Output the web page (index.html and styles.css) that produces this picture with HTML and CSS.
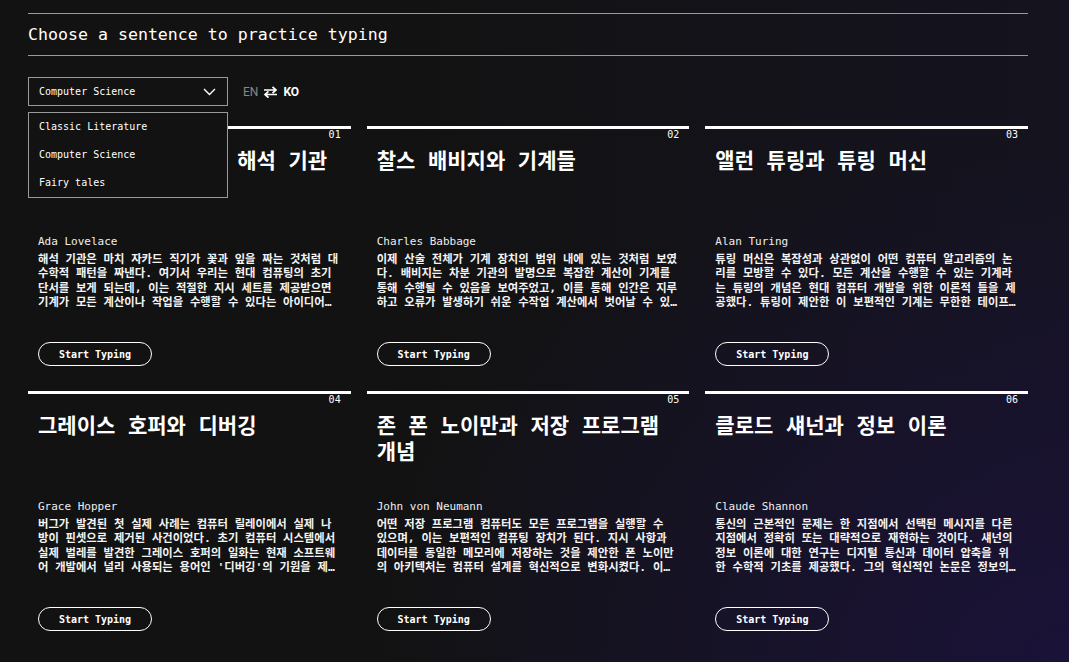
FILE: index.html
```html
<!DOCTYPE html>
<html lang="ko">
<head>
<meta charset="utf-8">
<title>Typing Practice</title>
<link rel="stylesheet" href="styles.css">
</head>
<body>
<main class="page">
  <header class="head">
    <h1 class="head-title">Choose a sentence to practice typing</h1>
  </header>

  <div class="controls">
    <div class="select-wrap">
      <button class="select">
        <span>Computer Science</span>
        <svg class="chev" width="13" height="8" viewBox="0 0 13 8"><polyline points="1,1 6.5,6.5 12,1" fill="none" stroke="#fff" stroke-width="1.4"/></svg>
      </button>
      <ul class="menu">
        <li>Classic Literature</li>
        <li>Computer Science</li>
        <li>Fairy tales</li>
      </ul>
    </div>
    <div class="lang">
      <span class="lang-off">EN</span>
      <svg class="swap" width="15" height="12" viewBox="0 0 15 12"><path d="M1 4H13M9.5 0.8L13 4L9.5 7.2" fill="none" stroke="#fff" stroke-width="1.7"/><path d="M14 8.5H2M5.5 5.3L2 8.5L5.5 11.7" fill="none" stroke="#fff" stroke-width="1.7"/></svg>
      <span class="lang-on">KO</span>
    </div>
  </div>

  <section class="grid">
    <article class="card">
      <div class="num">01</div>
      <h2 class="title">에이다 러브레이스와 해석 기관</h2>
      <div class="author">Ada Lovelace</div>
      <p class="desc">해석 기관은 마치 자카드 직기가 꽃과 잎을 짜는 것처럼 대수학적 패턴을 짜낸다. 여기서 우리는 현대 컴퓨팅의 초기 단서를 보게 되는데, 이는 적절한 지시 세트를 제공받으면 기계가 모든 계산이나 작업을 수행할 수 있다는 아이디어를 보여준다.</p>
      <button class="btn">Start Typing</button>
    </article>
    <article class="card">
      <div class="num">02</div>
      <h2 class="title">찰스 배비지와 기계들</h2>
      <div class="author">Charles Babbage</div>
      <p class="desc">이제 산술 전체가 기계 장치의 범위 내에 있는 것처럼 보였다. 배비지는 차분 기관의 발명으로 복잡한 계산이 기계를 통해 수행될 수 있음을 보여주었고, 이를 통해 인간은 지루하고 오류가 발생하기 쉬운 수작업 계산에서 벗어날 수 있게 되었다.</p>
      <button class="btn">Start Typing</button>
    </article>
    <article class="card">
      <div class="num">03</div>
      <h2 class="title">앨런 튜링과 튜링 머신</h2>
      <div class="author">Alan Turing</div>
      <p class="desc">튜링 머신은 복잡성과 상관없이 어떤 컴퓨터 알고리즘의 논리를 모방할 수 있다. 모든 계산을 수행할 수 있는 기계라는 튜링의 개념은 현대 컴퓨터 개발을 위한 이론적 틀을 제공했다. 튜링이 제안한 이 보편적인 기계는 무한한 테이프를 가정한다.</p>
      <button class="btn">Start Typing</button>
    </article>
    <article class="card">
      <div class="num">04</div>
      <h2 class="title">그레이스 호퍼와 디버깅</h2>
      <div class="author">Grace Hopper</div>
      <p class="desc">버그가 발견된 첫 실제 사례는 컴퓨터 릴레이에서 실제 나방이 핀셋으로 제거된 사건이었다. 초기 컴퓨터 시스템에서 실제 벌레를 발견한 그레이스 호퍼의 일화는 현재 소프트웨어 개발에서 널리 사용되는 용어인 '디버깅'의 기원을 제공했다.</p>
      <button class="btn">Start Typing</button>
    </article>
    <article class="card">
      <div class="num">05</div>
      <h2 class="title">존 폰 노이만과 저장 프로그램 개념</h2>
      <div class="author">John von Neumann</div>
      <p class="desc">어떤 저장 프로그램 컴퓨터도 모든 프로그램을 실행할 수 있으며, 이는 보편적인 컴퓨팅 장치가 된다. 지시 사항과 데이터를 동일한 메모리에 저장하는 것을 제안한 폰 노이만의 아키텍처는 컴퓨터 설계를 혁신적으로 변화시켰다. 이는 오늘날까지 이어진다.</p>
      <button class="btn">Start Typing</button>
    </article>
    <article class="card">
      <div class="num">06</div>
      <h2 class="title">클로드 섀넌과 정보 이론</h2>
      <div class="author">Claude Shannon</div>
      <p class="desc">통신의 근본적인 문제는 한 지점에서 선택된 메시지를 다른 지점에서 정확히 또는 대략적으로 재현하는 것이다. 섀넌의 정보 이론에 대한 연구는 디지털 통신과 데이터 압축을 위한 수학적 기초를 제공했다. 그의 혁신적인 논문은 정보의 시대를 열었다.</p>
      <button class="btn">Start Typing</button>
    </article>
  </section>
</main>
</body>
</html>
```

FILE: styles.css
```css
* { box-sizing: border-box; }

html, body {
  margin: 0;
  padding: 0;
  min-height: 100%;
}

body {
  min-height: 662px;
  color: #fff;
  font-family: "DejaVu Sans Mono", "Noto Sans CJK KR", monospace;
  background:
    radial-gradient(ellipse 700px 520px at 100% 100%, rgba(28, 18, 64, 0.75) 0%, rgba(18, 18, 18, 0) 100%),
    linear-gradient(90deg, #121212 0%, #121212 35%, #15131f 100%);
}

.page {
  width: 1000px;
  margin-left: 28px;
  padding-top: 13px;
  position: relative;
}

.head {
  border-top: 1px solid #9a9a9a;
  border-bottom: 1px solid #9a9a9a;
}

.head-title {
  margin: 0;
  height: 41px;
  line-height: 42px;
  font-size: 16.6px;
  font-weight: normal;
}

.controls {
  display: flex;
  align-items: center;
  gap: 15px;
  margin-top: 21px;
}

.select-wrap {
  position: relative;
  width: 200px;
}

.select {
  display: flex;
  align-items: center;
  justify-content: space-between;
  width: 200px;
  height: 29px;
  padding: 0 11px 0 10px;
  background: transparent;
  border: 1px solid #9a9a9a;
  color: #fff;
  font-family: inherit;
  font-size: 10px;
}

.menu {
  position: absolute;
  left: 0;
  top: 35px;
  width: 200px;
  margin: 0;
  padding: 0;
  list-style: none;
  background: #121212;
  border: 1px solid #9a9a9a;
  z-index: 5;
}

.menu li {
  height: 28px;
  line-height: 28px;
  padding-left: 10px;
  font-size: 10px;
  color: #fff;
}

.lang {
  display: flex;
  align-items: center;
  gap: 5px;
  font-family: Roboto, "Liberation Sans", sans-serif;
  font-size: 12px;
}

.lang-off { color: #888; }
.lang-on { font-weight: bold; color: #fff; }

.grid {
  display: grid;
  grid-template-columns: repeat(3, 1fr);
  column-gap: 16px;
  row-gap: 15px;
  margin-top: 20px;
}

.card {
  border-top: 3px solid #fff;
  padding: 0 10px 10px;
  display: flex;
  flex-direction: column;
  align-items: flex-start;
}

.num {
  align-self: flex-end;
  font-size: 10px;
  line-height: 12px;
  margin-top: 0;
}

.title {
  margin: 7px 0 8px;
  min-height: 78px;
  font-size: 21px;
  line-height: 26px;
  font-weight: bold;
}

.author {
  font-size: 11px;
  line-height: 16px;
  color: #eee;
}

.desc {
  margin: 3px 0 0;
  font-size: 11.3px;
  line-height: 14.3px;
  font-weight: bold;
  color: #f4f4f4;
  display: -webkit-box;
  -webkit-box-orient: vertical;
  -webkit-line-clamp: 4;
  overflow: hidden;
  height: 57.2px;
}

.btn {
  margin-top: 32px;
  height: 24px;
  width: 114px;
  border: 1px solid #fff;
  border-radius: 12px;
  background: transparent;
  color: #fff;
  font-family: inherit;
  font-size: 10px;
  font-weight: bold;
}
```
